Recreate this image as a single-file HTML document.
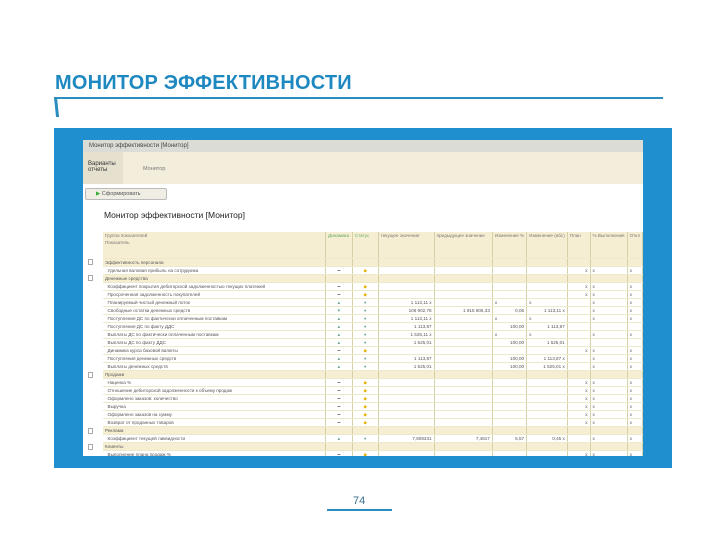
<!DOCTYPE html>
<html><head><meta charset="utf-8"><style>
*{margin:0;padding:0;box-sizing:border-box}
body{width:720px;height:540px;background:#fff;position:relative;overflow:hidden;font-family:"Liberation Sans",sans-serif}
.t{position:absolute;left:55px;top:72px;font-size:20px;font-weight:bold;color:#1e88c0;letter-spacing:0.2px}
.ln{position:absolute;left:55px;top:97px;width:608px;height:2px;background:#2a8cbf}
.hk{position:absolute;left:55px;top:97px;width:3px;height:20px;background:#2a8cbf;transform:skewX(6deg)}
.blue{position:absolute;left:54px;top:128px;width:618px;height:340px;background:#1f8fcf}
.in{position:absolute;left:83px;top:140px;width:560px;height:316px;background:#fff;overflow:hidden;font-size:5px;color:#555}
.tb{position:absolute;left:0;top:0;width:560px;height:12px;background:#dcdcd6;font-size:6px;padding:3px 6px;color:#444}
.pn{position:absolute;left:0;top:12px;width:560px;height:32px;background:#f3eedb}
.pa{position:absolute;left:0;top:12px;width:40px;height:32px;background:#e6e1cf;font-size:6px;padding:9px 5px;color:#333}
.btn{position:absolute;left:2px;top:48px;width:82px;height:12px;border:1px solid #bbb;border-radius:2px;background:#f0eee4;font-size:5.5px;padding:2px 10px}
.h{position:absolute;left:21px;top:70px;font-size:8.5px;color:#222}
table{position:absolute;left:20px;top:92px;border-collapse:collapse;width:540px}
td{height:8px;padding:0 2px;white-space:nowrap;overflow:hidden;line-height:7px;border-right:1px solid #d6d0a8;font-size:4.6px}
tr.s td{background:#f6eed2}
tr.hd td{background:#f6eed2;height:26px;vertical-align:top;color:#777}
tr td{border-bottom:1px solid #eee8cc}
.r{text-align:right}.c{text-align:center}
.y{color:#e0b000}.g{color:#7a9}
.pg{position:absolute;left:353px;top:495px;font-size:11px;color:#3a6e8e}
.pl{position:absolute;left:327px;top:509px;width:65px;height:2px;background:#2a8cbf}
.ic{position:absolute;left:5px;width:5px;height:6px;border:1px solid #aaa;background:#fff}
</style></head><body>
<div class="t">МОНИТОР ЭФФЕКТИВНОСТИ</div>
<div class="ln"></div><div class="hk"></div>
<div class="blue"></div>
<div class="in">
<div class="tb">Монитор эффективности [Монитор]</div>
<div class="pn"></div><div class="pa">Варианты<br>отчеты</div>
<div style="position:absolute;left:60px;top:26px;font-size:5.5px;color:#777">Монитор</div>
<div class="btn"><span style="color:#3a3">▶</span> Сформировать</div>
<div class="h">Монитор эффективности [Монитор]</div>
<div class="ic" style="top:119px"></div><div class="ic" style="top:135px"></div><div class="ic" style="top:232px"></div><div class="ic" style="top:288px"></div><div class="ic" style="top:304px"></div>
<table>
<colgroup><col style="width:242px"><col style="width:27px"><col style="width:28px"><col style="width:60px"><col style="width:60px"><col style="width:30px"><col style="width:40px"><col style="width:25px"><col style="width:25px"><col></colgroup>
<tr class="hd"><td>Группа показателей<br>Показатель</td><td style="color:#6a6">Динамика</td><td style="color:#6a6">Статус</td><td>текущее значение</td><td>предыдущее значение</td><td>Изменение %</td><td>Изменение (абс)</td><td>План</td><td>% Выполнения</td><td>Откл</td></tr>
<tr class="s"><td>Эффективность персонала</td><td></td><td></td><td></td><td></td><td></td><td></td><td></td><td></td><td></td></tr>
<tr><td>&nbsp;&nbsp;Удельная валовая прибыль на сотрудника</td><td class="c">━</td><td class="c y">◆</td><td></td><td></td><td></td><td></td><td class="r">x</td><td>x</td><td>x</td></tr>
<tr class="s"><td>Денежные средства</td><td></td><td></td><td></td><td></td><td></td><td></td><td></td><td></td><td></td></tr>
<tr><td>&nbsp;&nbsp;Коэффициент покрытия дебиторской задолженностью текущих платежей</td><td class="c">━</td><td class="c y">◆</td><td></td><td></td><td></td><td></td><td class="r">x</td><td>x</td><td>x</td></tr>
<tr><td>&nbsp;&nbsp;Просроченная задолженность покупателей</td><td class="c">━</td><td class="c y">◆</td><td></td><td></td><td></td><td></td><td class="r">x</td><td>x</td><td>x</td></tr>
<tr><td>&nbsp;&nbsp;Планируемый чистый денежный поток</td><td class="c g">▲</td><td class="c g">●</td><td class="r">1 113,11 x</td><td></td><td>x</td><td>x</td><td></td><td>x</td><td>x</td></tr>
<tr><td>&nbsp;&nbsp;Свободные остатки денежных средств</td><td class="c g">▼</td><td class="c g">●</td><td class="r">106 902,78</td><td class="r">1 815 806,33</td><td class="r">0,06</td><td class="r">1 113,11 x</td><td></td><td>x</td><td>x</td></tr>
<tr><td>&nbsp;&nbsp;Поступления ДС по фактически оплаченным поставкам</td><td class="c g">▲</td><td class="c g">●</td><td class="r">1 113,11 x</td><td></td><td>x</td><td>x</td><td></td><td>x</td><td>x</td></tr>
<tr><td>&nbsp;&nbsp;Поступления ДС по факту ДДС</td><td class="c g">▲</td><td class="c g">●</td><td class="r">1 113,87</td><td></td><td class="r">100,00</td><td class="r">1 113,87</td><td></td><td></td><td></td></tr>
<tr><td>&nbsp;&nbsp;Выплаты ДС по фактически оплаченным поставкам</td><td class="c g">▲</td><td class="c g">●</td><td class="r">1 525,11 x</td><td></td><td>x</td><td>x</td><td></td><td>x</td><td>x</td></tr>
<tr><td>&nbsp;&nbsp;Выплаты ДС по факту ДДС</td><td class="c g">▲</td><td class="c g">●</td><td class="r">1 525,01</td><td></td><td class="r">100,00</td><td class="r">1 525,01</td><td></td><td></td><td></td></tr>
<tr><td>&nbsp;&nbsp;Динамика курса базовой валюты</td><td class="c">━</td><td class="c y">◆</td><td></td><td></td><td></td><td></td><td class="r">x</td><td>x</td><td>x</td></tr>
<tr><td>&nbsp;&nbsp;Поступления денежных средств</td><td class="c g">▲</td><td class="c g">●</td><td class="r">1 113,87</td><td></td><td class="r">100,00</td><td class="r">1 113,87 x</td><td></td><td>x</td><td>x</td></tr>
<tr><td>&nbsp;&nbsp;Выплаты денежных средств</td><td class="c g">▲</td><td class="c g">●</td><td class="r">1 525,01</td><td></td><td class="r">100,00</td><td class="r">1 525,01 x</td><td></td><td>x</td><td>x</td></tr>
<tr class="s"><td>Продажи</td><td></td><td></td><td></td><td></td><td></td><td></td><td></td><td></td><td></td></tr>
<tr><td>&nbsp;&nbsp;Наценка %</td><td class="c">━</td><td class="c y">◆</td><td></td><td></td><td></td><td></td><td class="r">x</td><td>x</td><td>x</td></tr>
<tr><td>&nbsp;&nbsp;Отношение дебиторской задолженности к объему продаж</td><td class="c">━</td><td class="c y">◆</td><td></td><td></td><td></td><td></td><td class="r">x</td><td>x</td><td>x</td></tr>
<tr><td>&nbsp;&nbsp;Оформлено заказов: количество</td><td class="c">━</td><td class="c y">◆</td><td></td><td></td><td></td><td></td><td class="r">x</td><td>x</td><td>x</td></tr>
<tr><td>&nbsp;&nbsp;Выручка</td><td class="c">━</td><td class="c y">◆</td><td></td><td></td><td></td><td></td><td class="r">x</td><td>x</td><td>x</td></tr>
<tr><td>&nbsp;&nbsp;Оформлено заказов на сумму</td><td class="c">━</td><td class="c y">◆</td><td></td><td></td><td></td><td></td><td class="r">x</td><td>x</td><td>x</td></tr>
<tr><td>&nbsp;&nbsp;Возврат от проданных товаров</td><td class="c">━</td><td class="c y">◆</td><td></td><td></td><td></td><td></td><td class="r">x</td><td>x</td><td>x</td></tr>
<tr class="s"><td>Реклама</td><td></td><td></td><td></td><td></td><td></td><td></td><td></td><td></td><td></td></tr>
<tr><td>&nbsp;&nbsp;Коэффициент текущей ликвидности</td><td class="c g">▲</td><td class="c g">●</td><td class="r">7,608331</td><td class="r">7,4817</td><td class="r">5,57</td><td class="r">0,45 x</td><td></td><td>x</td><td>x</td></tr>
<tr class="s"><td>Клиенты</td><td></td><td></td><td></td><td></td><td></td><td></td><td></td><td></td><td></td></tr>
<tr><td>&nbsp;&nbsp;Выполнение плана продаж %</td><td class="c">━</td><td class="c y">◆</td><td></td><td></td><td></td><td></td><td class="r">x</td><td>x</td><td>x</td></tr>
</table>
</div>
<div class="pg">74</div><div class="pl"></div>
</body></html>
